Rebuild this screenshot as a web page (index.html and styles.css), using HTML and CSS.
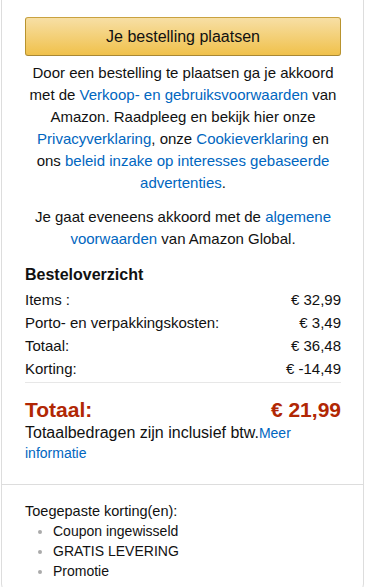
FILE: index.html
```html
<!DOCTYPE html>
<html>
	<head>
		<meta charset="UTF-8">
		<title>Bestelling</title>
		<link rel="stylesheet" href="styles.css">
	</head>
	<body>
		<div class="order-box">
			<div class="order-main">
				<button class="place-order">Je bestelling plaatsen</button>
				<p class="legal">
					Door een bestelling te plaatsen ga je akkoord met de <a href="#">Verkoop- en gebruiksvoorwaarden</a> van Amazon. Raadpleeg en bekijk hier onze <a href="#">Privacyverklaring</a>, onze <a href="#">Cookieverklaring</a> en ons <a href="#">beleid inzake op interesses gebaseerde advertenties</a>.
				</p>
				<p class="legal">
					Je gaat eveneens akkoord met de <a href="#">algemene voorwaarden</a> van Amazon Global.
				</p>

				<h3 class="summary-title">Besteloverzicht</h3>
				<div class="summary">
					<div class="row"><span>Items :</span><span>€ 32,99</span></div>
					<div class="row"><span>Porto- en verpakkingskosten:</span><span>€ 3,49</span></div>
					<div class="row"><span>Totaal:</span><span>€ 36,48</span></div>
					<div class="row"><span>Korting:</span><span>€ -14,49</span></div>
				</div>

				<div class="grand-total">
					<span>Totaal:</span>
					<span>€ 21,99</span>
				</div>
				<p class="vat">Totaalbedragen zijn inclusief btw.<a href="#">Meer informatie</a></p>
			</div>

			<div class="discounts">
				<div class="discounts-title">Toegepaste korting(en):</div>
				<ul>
					<li>Coupon ingewisseld</li>
					<li>GRATIS LEVERING</li>
					<li>Promotie</li>
				</ul>
			</div>
		</div>
	</body>
</html>
```

FILE: styles.css
```css
body{
	margin: 0;
	padding: 0;
	background: #fff;
	font-family: Arial, "Liberation Sans", sans-serif;
	color: #111;
}
a{
	color: #0066c0;
	text-decoration: none;
}
.order-box{
	width: 363px;
	margin: -8px 0 0 1px;
	border: 1px solid #ddd;
	border-radius: 8px;
	box-sizing: border-box;
}
.order-main{
	padding: 24px 22px 21px 23px;
	border-bottom: 1px solid #ddd;
}
.place-order{
	display: block;
	width: 100%;
	height: 39px;
	border: 1px solid;
	border-color: #c9a240 #b8932e #a88734;
	border-radius: 3px;
	background: linear-gradient(to bottom, #f7dfa5, #f0c14b);
	font: 16px Arial, "Liberation Sans", sans-serif;
	color: #111;
	padding: 0;
}
.legal{
	margin: 6px 0 0;
	font-size: 15px;
	line-height: 22px;
	text-align: center;
}
.legal + .legal{
	margin-top: 12px;
}
.summary-title{
	margin: 14px 0 0;
	font-size: 16px;
	line-height: 22px;
	font-weight: bold;
}
.summary{
	margin-top: 2px;
	padding-bottom: 2px;
	border-bottom: 1px solid #e7e7e7;
}
.row{
	display: flex;
	justify-content: space-between;
	font-size: 15px;
	line-height: 23px;
}
.grand-total{
	display: flex;
	justify-content: space-between;
	margin-top: 14px;
	font-size: 21px;
	line-height: 26px;
	font-weight: bold;
	color: #b12704;
}
.vat{
	margin: 0;
	font-size: 16px;
	line-height: 20px;
}
.vat a{
	font-size: 14px;
}
.discounts{
	padding: 17px 23px 10px;
}
.discounts-title{
	font-size: 14.5px;
	line-height: 19px;
}
.discounts ul{
	margin: 0;
	padding-left: 28px;
	list-style: disc;
}
.discounts li{
	line-height: 20px;
	font-size: 14px;
}
.discounts li::marker{
	color: #aaa;
}
```
